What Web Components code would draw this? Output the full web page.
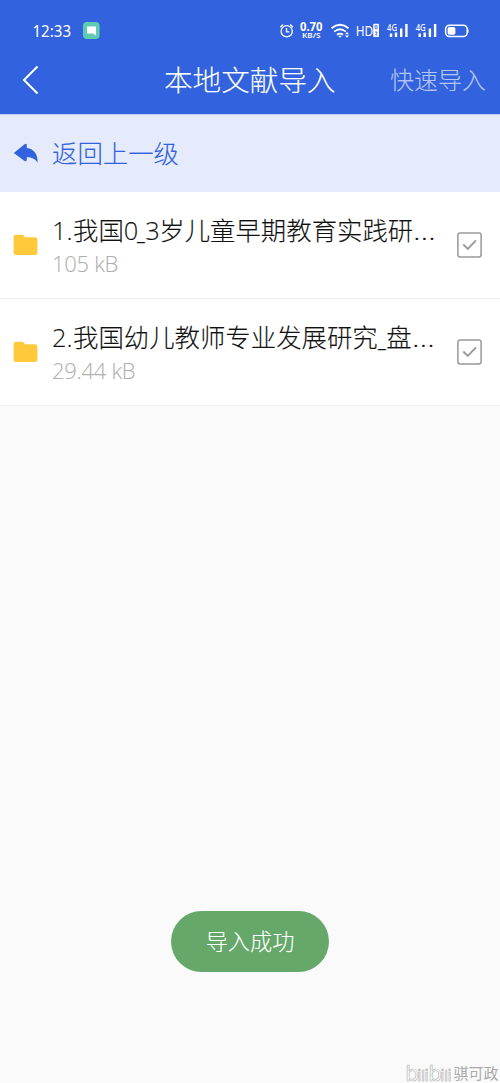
<!DOCTYPE html>
<html lang="zh-CN"><head><meta charset="utf-8"><title>本地文献导入</title>
<style>
html,body{margin:0;height:100%}
body{background:#fafafa;font-family:"Open Sans","Noto Sans CJK SC",sans-serif;font-weight:300;-webkit-text-stroke:.1px}
</style></head><body>
<import-screen></import-screen>
<script>
const define=(name,html)=>{
  const t=document.createElement('template');t.innerHTML=html;
  customElements.define(name,class extends HTMLElement{
    constructor(){super();this.attachShadow({mode:'open'}).append(t.content.cloneNode(true));}
  });
};
define('status-bar',`
<style>:host{display:block;height:50px;-webkit-text-stroke:0}svg{display:block}
text{fill:#fff;font-family:"Noto Sans",sans-serif}</style>
<svg width="500" height="50" fill="none" stroke="#fff" font-weight="400">
 <text x="32.5" y="36.8" font-size="16" textLength="38.5" lengthAdjust="spacingAndGlyphs" stroke="none">12:33</text>
 <rect x="83" y="22" width="16.6" height="17" rx="4" fill="#5fcbb0" stroke="none"/>
 <path d="M87 26.5h9v9l-3-2h-6z" fill="#fff" stroke="none"/>
 <g stroke-width="1.3"><circle cx="286.7" cy="31.3" r="5.6"/><path d="M286.5 28v3.8h2.8M280.3 27.2l2.8-2.6M293 27.2l-2.8-2.6"/></g>
 <g stroke="none" font-weight="700"><text x="300" y="31" font-size="11.5" textLength="22.5" lengthAdjust="spacingAndGlyphs">0.70</text>
 <text x="302" y="38.3" font-size="7.5" font-weight="600" textLength="18.5" lengthAdjust="spacingAndGlyphs">KB/S</text></g>
 <g stroke-width="1.8"><path d="M331.5 28.2q8.5-7 17 0M334.2 31.6q5.8-4.6 11.6 0M337 34.7q3-2.2 6 0"/></g>
 <path d="M338.2 35.7h3.6l-1.8 2.1z" fill="#fff" stroke="none"/>
 <path d="M345 34.2l2-2.2 2 2.2zM345 35.5h4l-2 2.2z" fill="#fff" stroke="none"/>
 <text x="355.8" y="36.3" font-size="15" textLength="17.5" lengthAdjust="spacingAndGlyphs" stroke="none">HD</text>
 <rect x="373.2" y="23.7" width="5.8" height="13.4" rx="1" fill="#fff" stroke="none"/>
 <path d="M375.1 25.7h2v3h-2zM375 32h2.2l-1.5 3h1.7" stroke="#3262dd" stroke-width=".8"/>
 <g id="s"><text x="387" y="30.5" font-size="9" font-weight="500" textLength="10" lengthAdjust="spacingAndGlyphs" stroke="none">4G</text>
 <path d="M391 33.5V37M396 32.5V37M401.2 28.5V37M406.4 24V37" stroke-width="2.4"/></g>
 <use href="#s" x="28.7"/>
 <rect x="445.6" y="25.2" width="21.6" height="11.4" rx="4" stroke-width="1.5"/><rect x="447.6" y="27" width="7.8" height="7.8" rx="1.8" fill="#fff" stroke="none"/><path d="M467.9 29.2v3.5" stroke-width="1.2"/>
</svg>`);
define('nav-bar',`
<style>:host{display:grid;grid-template-columns:164px 1fr 110px;height:64px;align-items:center;color:#fff}
svg{display:block;margin:-5px 0 0 21px}.t{font-size:28.6px;line-height:40px;margin-top:-5px;white-space:nowrap}.a{font-size:24px;line-height:36px;margin-top:-5px;color:#b5c6f3;white-space:nowrap}</style>
<svg width="20" height="32" fill="none" stroke="#fff" stroke-width="2"><path d="M16.5 2.5L3 16l13.5 13.5"/></svg>
<span class="t"><slot></slot></span><span class="a"><slot name="action"></slot></span>`);
define('back-row',`
<style>:host{display:flex;box-sizing:border-box;height:78px;align-items:center;background:#e5ebfb;border-top:1px solid #bccbf4;color:#3262dd;font-size:25.4px;line-height:38px}
svg{margin:0 13px 0 13px}span{margin-top:-1px}</style>
<svg width="26" height="21" fill="#3262dd"><path d="M.8 9.9L11.6 1.2Q13.6.1 13.8 2.2V5.1C20.5 5.8 25 11 24.6 19.6C21.8 15.6 18.6 14.2 13.8 14.3V16.8Q13.6 19 11.6 17.9Z"/></svg>
<span><slot></slot></span>`);
define('file-row',`
<style>:host{display:flex;box-sizing:border-box;height:107px;align-items:center;background:#fff;border-bottom:1px solid #eee;padding:0 18px 0 13px}
.b{flex:1;min-width:0;margin-left:14px;align-self:flex-start;padding-top:19px}
.n{font-size:25.4px;line-height:38px;height:38px;color:#111;white-space:nowrap}.s{font-size:22px;line-height:28px;color:#b0b0b0;letter-spacing:-.3px}
svg{flex:none}</style>
<svg width="25" height="22"><path d="M3 .8h6q1 0 1.6.8l1.2 1.7H22q2.4 0 2.4 2.4v13q0 2.4-2.4 2.4H3q-2.4 0-2.4-2.4v-15.5Q.6.8 3 .8z" fill="#ffc93c"/></svg>
<div class="b"><div class="n"><slot></slot></div><div class="s"><slot name="size"></slot></div></div>
<svg width="25" height="26" fill="none" stroke="#999"><rect x=".9" y="1.1" width="23.2" height="23.8" rx="2.2" stroke-width="1.5"/><path d="M6.3 12.5l4.5 4.4 8.2-8.6" stroke-width="1.9"/></svg>`);
define('toast-pill',`
<style>:host{display:flex;align-items:center;justify-content:center;width:158px;height:61px;border-radius:31px;background:#66a86a;color:#fff;font-size:22.2px;line-height:32px}span{margin-top:0}</style><span><slot></slot></span>`);
define('water-mark',`
<style>:host{display:block;-webkit-text-stroke:0}svg{display:block}</style>
<svg width="100" height="30" fill="#fdfdfd" stroke="#b0b0b0" stroke-width=".6"><text y="27.5" font-family="Inter" font-weight="400" font-size="15"><tspan x="5.5" font-size="22" textLength="11">b</tspan><tspan x="17.5">ili</tspan><tspan x="28.5" font-size="22">b</tspan><tspan x="40.5">ili</tspan></text>
<text x="53.5" y="25.5" fill="#aaa" stroke="none" font-family="Noto Sans CJK SC" font-size="15" font-weight="400" textLength="45">骐可政</text></svg>`);
define('import-screen',`
<style>:host{display:flex;flex-direction:column;height:1083px;position:relative;overflow:hidden}
header{background:#3262dd;height:114px}i{display:inline-block;font-style:normal;white-space:nowrap}
.u{transform:scaleX(.75);transform-origin:0 0}.e{transform:scaleX(1.25);transform-origin:0 0}
main{flex:1;display:flex;flex-direction:column}
toast-pill{margin:505px auto 0 171px}
water-mark{position:absolute;right:0;bottom:0}</style>
<header><status-bar></status-bar><nav-bar>本地文献导入<span slot="action">快速导入</span></nav-bar></header>
<main><back-row>返回上一级</back-row>
<file-row><i style="width:21px">1.</i>我国<i style="width:13.5px">0</i><i class="u" style="width:8px">_</i><i style="width:14px">3</i>岁儿童早期教育实践研<i class="e">…</i><span slot="size">105 kB</span></file-row>
<file-row><i style="width:21px">2.</i>我国幼儿教师专业发展研究<i class="u" style="width:8.5px">_</i>盘<i class="e">…</i><span slot="size">29.44 kB</span></file-row>
<toast-pill>导入成功</toast-pill></main>
<water-mark></water-mark>`);
</script></body></html>
